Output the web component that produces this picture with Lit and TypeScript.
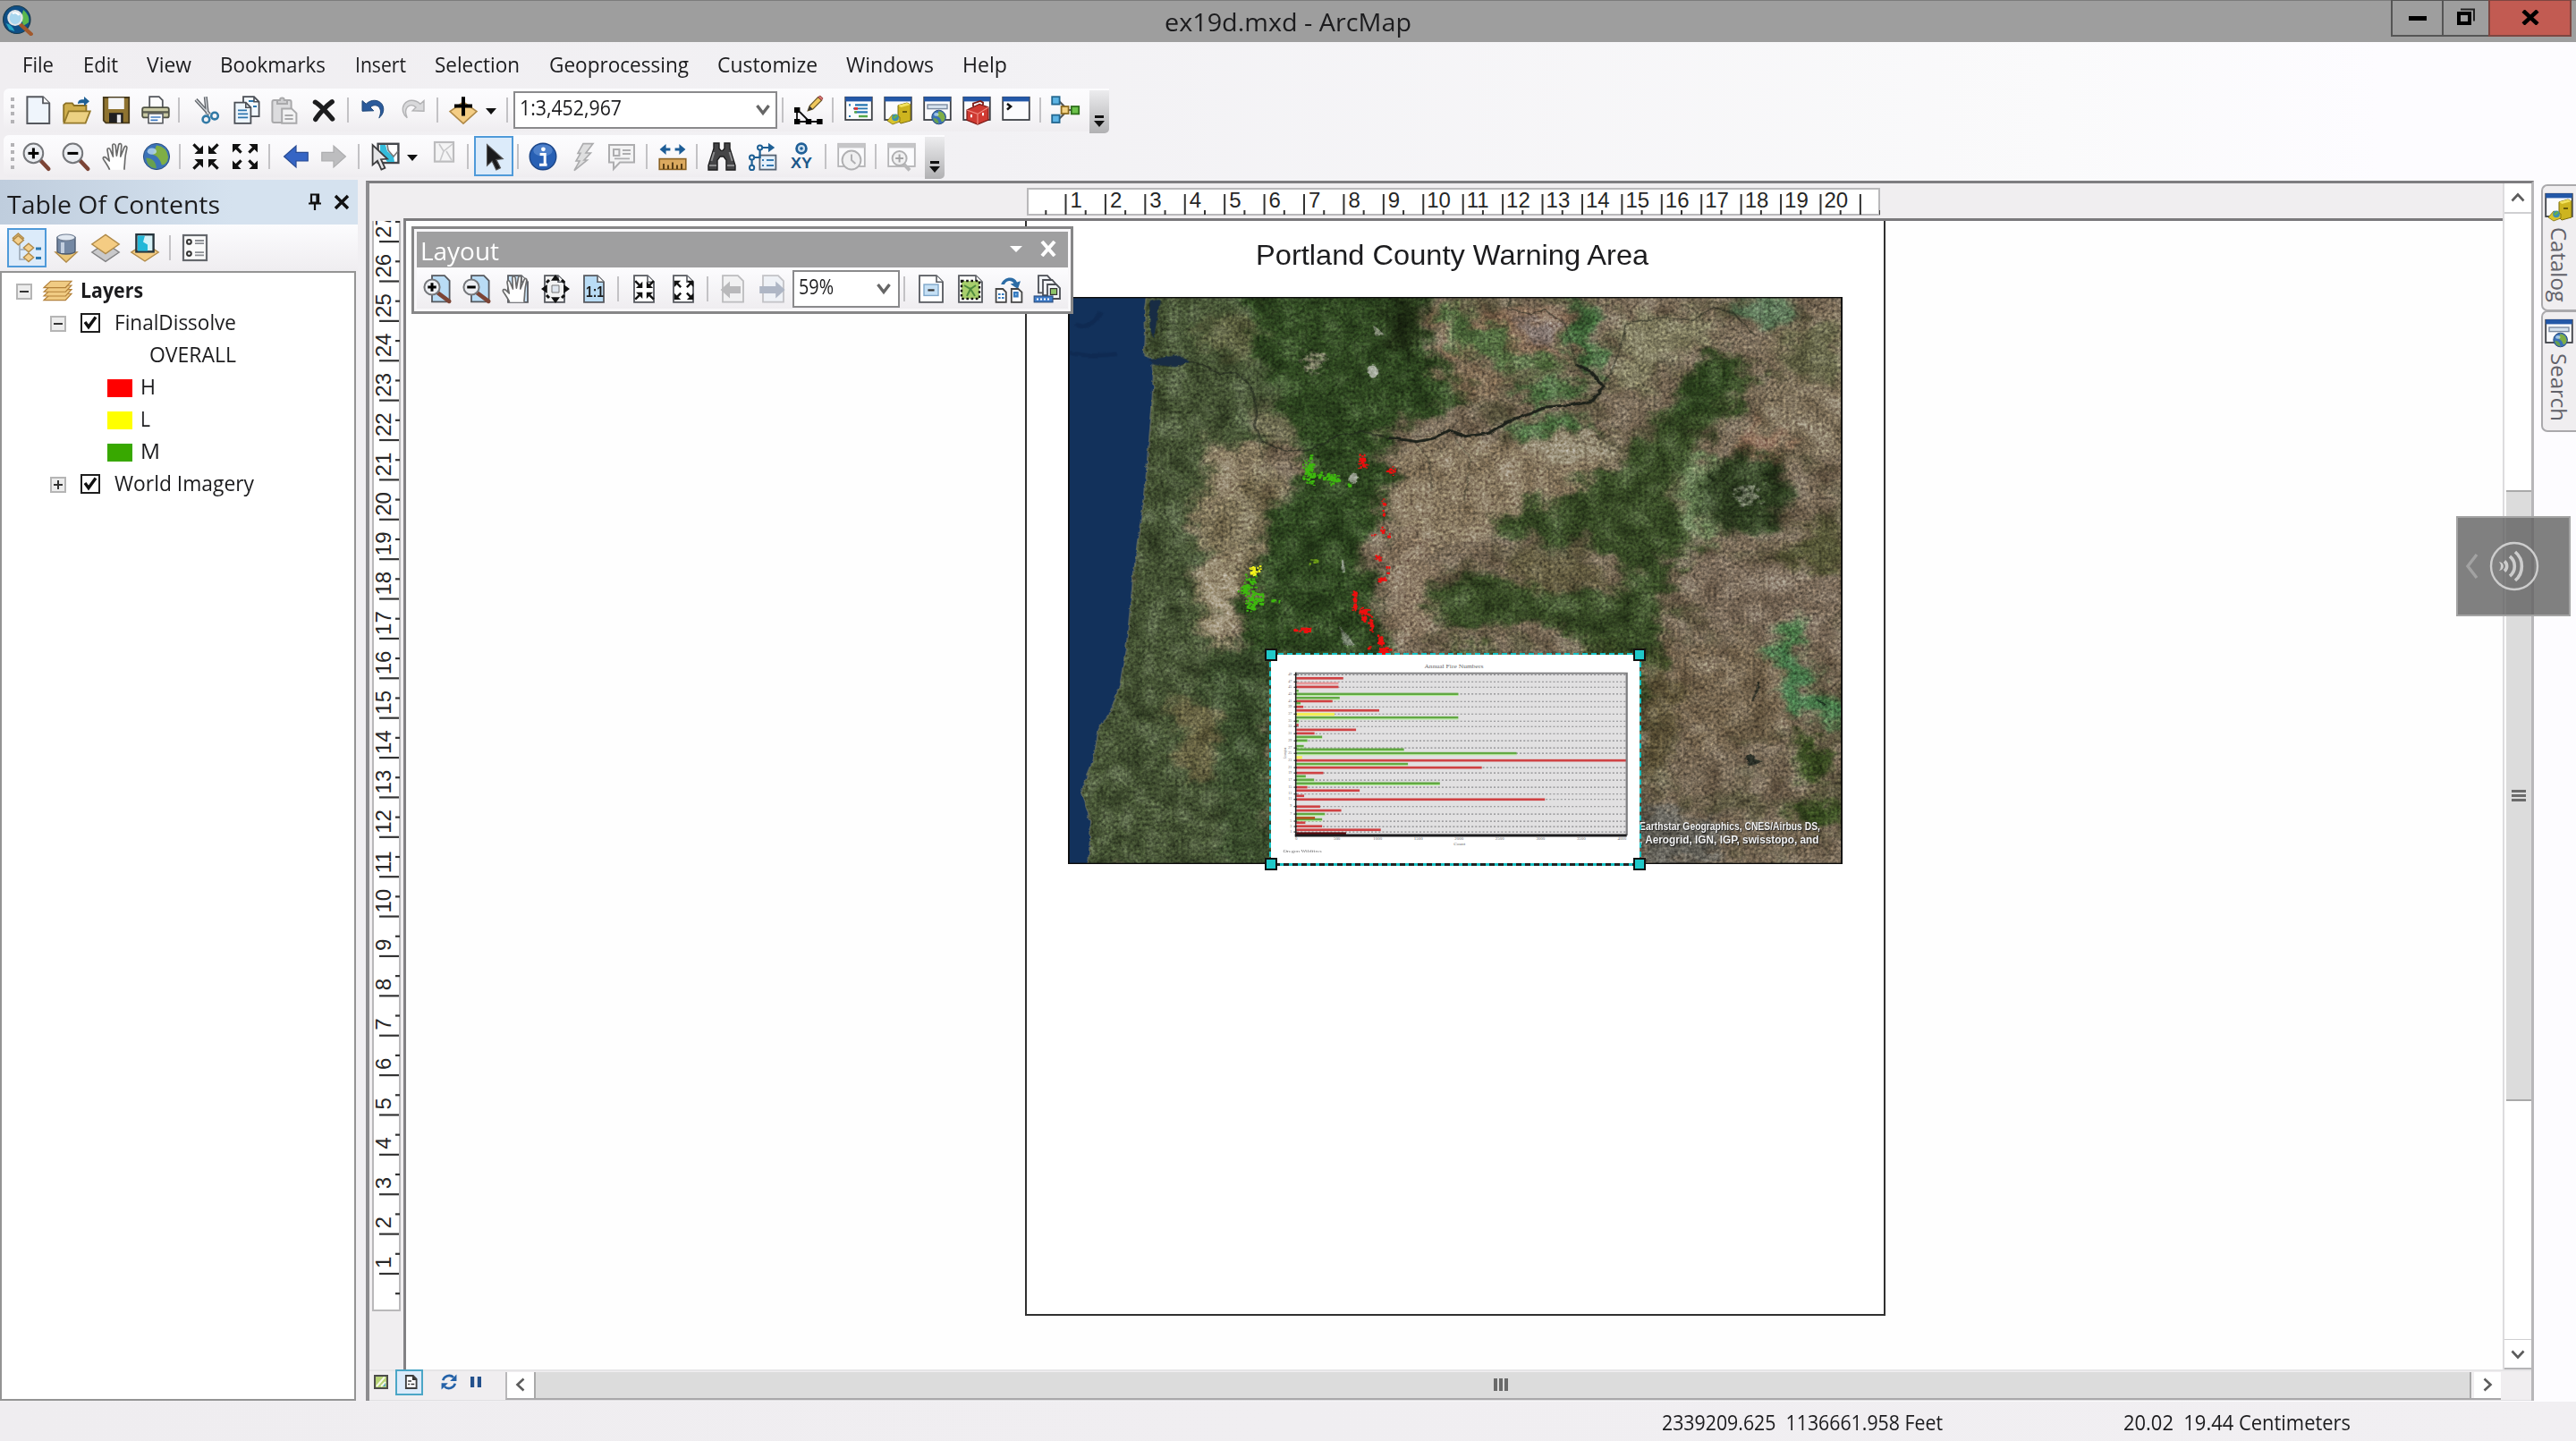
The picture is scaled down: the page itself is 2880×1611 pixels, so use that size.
import { LitElement, html, svg, css, TemplateResult, SVGTemplateResult } from "lit";
import { customElement } from "lit/decorators.js";

const UI = '"Open Sans", "Noto Sans", sans-serif';
const ARIAL = '"Liberation Sans", Arial, sans-serif';

const ctx = document.createElement("canvas").getContext("2d")!;

/** Text condensed or widened horizontally to occupy an exact width. */
function fit(text: string, size: number, width: number, family = UI, weight = 400): TemplateResult {
  ctx.font = `${weight} ${size}px ${family}`;
  const k = width / ctx.measureText(text).width;
  return html`<span class="fit" style="width:${width}px;font:${weight} ${size}px ${family}"
    ><span class="fit-in" style="transform:scaleX(${k.toFixed(4)})">${text}</span></span>`;
}

type Art = SVGTemplateResult;

const page = (fill = "#f4f9fe", x = 2.5): Art =>
  svg`<path d="M${x} .6h7.5l3.5 3.5v11.3h-11z" fill=${fill} stroke="#55585e" stroke-width=".9"/><path d="M${x + 7.5} .6v3.5h3.5" fill="#fff" stroke="#55585e" stroke-width=".8"/>`;
const lens = (cx: number, cy: number, r: number, sign: boolean, fill = "#eceef2"): Art => svg`
  <path d="M${cx + r * 0.75} ${cy + r * 0.75}L14.6 14.9" stroke="#7c4436" stroke-width="2.3" stroke-linecap="round"/>
  <circle cx=${cx} cy=${cy} r=${r} fill=${fill} stroke="#75777b" stroke-width="1"/>
  <path d="M${cx - r * 0.55} ${cy}h${r * 1.1}" stroke="#000" stroke-width="1.5"/>
  ${sign ? svg`<path d="M${cx} ${cy - r * 0.55}v${r * 1.1}" stroke="#000" stroke-width="1.5"/>` : ""}`;
const hand: Art = svg`<path d="M4.3 15.4C3.6 13.6 2 11.4.7 9.3.4 8.2 1.7 8 2.4 8.8l1.7 1.7L3 4.3c-.1-1.1 1.2-1.3 1.6-.2L6.2 8 5.9 1.9c0-1.2 1.5-1.2 1.7 0L8.2 7.6 9.3 1.5c.3-1.1 1.7-.8 1.6.3L10.4 8l2.1-5.2c.5-1 1.7-.5 1.4.6-.7 3-1 5-1.1 7.1 0 2-.4 3.4-.3 4.9" fill="#fff" stroke="#6b6b6b" stroke-width=".85" stroke-linejoin="round"/>`;
const arrowsIn: Art = svg`<g fill="#111" stroke="#111" stroke-width="1.6"><path d="M1.2 1.2l3 3M14.8 1.2l-3 3M1.2 14.8l3-3M14.8 14.8l-3-3"/><path stroke="none" d="M6.5 1.7v4.8H1.7zM9.5 1.7v4.8H14.3zM6.5 14.300V9.500H1.700zM9.500 14.300V9.500H14.300z"/></g>`;
const arrowsOut: Art = svg`<g fill="#111" stroke="#111" stroke-width="1.6"><path d="M2.500 2.500l3.300 3.300M13.500 2.500l-3.300 3.300M2.500 13.500l3.300-3.300M13.500 13.500l-3.300-3.300"/><path stroke="none" d="M1 1h4.800L1 5.800zM15 1h-4.800L15 5.800zM1 15h4.800L1 10.200zM15 15h-4.800L15 10.200z"/></g>`;
const win = (c = "#3e4146", bar = "#2358a8"): Art =>
  svg`<rect x=".6" y=".9" width="14.800" height="12.600" fill="#fbfbfd" stroke=${c} stroke-width=".9"/><rect x=".6" y=".6" width="14.800" height="2.600" fill=${bar}/>`;
const diamond = (cx: number, cy: number, w: number, h: number, fill: string, st = "#b08a48"): Art =>
  svg`<path d="M${cx} ${cy - h}L${cx + w} ${cy}L${cx} ${cy + h}L${cx - w} ${cy}z" fill=${fill} stroke=${st} stroke-width=".7"/>`;
const earth = (cx: number, cy: number, r: number): Art => svg`
  <circle cx=${cx} cy=${cy} r=${r} fill="#3a72b8" stroke="#2d4f7d" stroke-width=".5"/>
  <path d="M${cx} ${cy - r * 0.85}q${r * 0.8} ${r * 0.1} ${r * 0.9} ${r * 0.9}q-${r * 0.1} ${r * 0.6}-${r * 0.5} ${r * 0.6}q-${r * 0.2}-${r * 0.7}-${r * 0.7}-${r * 0.8}z" fill="#7fae45"/>
  <path d="M${cx - r * 0.8} ${cy + r * 0.1}q${r * 0.7} 0 ${r * 0.8} ${r * 0.8}q-${r * 0.7} 0-${r * 0.8}-${r * 0.8}z" fill="#68a04e"/>
  <ellipse cx=${cx - r * 0.35} cy=${cy - r * 0.4} rx=${r * 0.35} ry=${r * 0.25} fill="#b9d8f2" opacity=".8"/>`;

const ICONS: Record<string, Art> = {
  new: svg`<path d="M1.700.6h8.800l3.600 3.600v11.300H1.700z" fill="#eff5fc" stroke="#55585e" stroke-width="1"/><path d="M10.500.6v3.600h3.600" fill="#fff" stroke="#55585e" stroke-width=".9"/>`,
  open: svg`<path d="M.6 14.900V5.200l1.200-1h3.600l1 1.300h6.800v3" fill="#cfae4c" stroke="#8a6f22" stroke-width=".9"/><path d="M.8 15.300l2.600-6.600h12l-2.600 6.600z" fill="#ecd182" stroke="#94792a" stroke-width=".9"/><path d="M8.500 4.500c0-2 1.500-2.600 3.500-2.400V.5l3 2.600-3 2.600V4.200c-1.600-.2-2.400 0-3.500.3z" fill="#1f6095"/>`,
  save: svg`<path d="M.9 1h14.200v14.200H2.200L.9 13.800z" fill="#8e7330" stroke="#46391a" stroke-width=".9"/><rect x="3.600" y="1.200" width="8.800" height="6.300" fill="#f5f6f7"/><rect x="4" y="9.600" width="7.800" height="5.500" fill="#1e1e20"/><rect x="8.400" y="10.600" width="2.200" height="4.500" fill="#e7e7e9"/>`,
  print: svg`<path d="M4.600.6h5.300l2 2v5h-7.300z" fill="#fdfdfd" stroke="#54575c" stroke-width=".9"/><rect x=".6" y="6.600" width="14.800" height="5.600" rx="1" fill="#c9c9a4" stroke="#4f5142" stroke-width=".9"/><path d="M1 9.200h14" stroke="#5b5d4e" stroke-width="1.200"/><path d="M4 10h8v5.400H4z" fill="#fff" stroke="#54575c" stroke-width=".8"/><path d="M5.200 12h5.600M5.200 13.700h4" stroke="#3f7ac0" stroke-width=".8"/>`,
  cut: svg`<path d="M2 2.200l7.600 8.200M7.400.6l1 9.600" stroke="#5d6167" stroke-width="2"/><path d="M2 2.200l7.600 8.200M7.400.6l1 9.600" stroke="#d0d3d7" stroke-width=".7"/><circle cx="7.700" cy="13.200" r="1.900" fill="none" stroke="#3179a5" stroke-width="1.300"/><circle cx="12.500" cy="11.300" r="1.900" fill="none" stroke="#3179a5" stroke-width="1.300"/>`,
  copy: svg`<path d="M6 .6h6l2.800 2.800v8.200H6z" fill="#f2f8fe" stroke="#4a4e55" stroke-width=".9"/><path d="M1.200 3.800h6.200l2.800 2.800v8.800h-9z" fill="#eef6fd" stroke="#4a4e55" stroke-width=".9"/><path d="M3 8.200h5M3 10.200h5.600M3 12.200h5.600M9 3h3M11.500 6h2" stroke="#2c75ad" stroke-width=".9"/><path d="M12 .6v2.800h2.800M7.400 3.800v2.800h2.800" fill="none" stroke="#4a4e55" stroke-width=".8"/>`,
  paste: svg`<g stroke="#a9a9ab" fill="#dcdcde"><rect x="1.200" y="2.500" width="10.600" height="12.500" rx="1"/><path d="M4 4.500V2.500h1.500a1.200 1.200 0 0 1 2.400 0h1.600v2z" fill="#cfcfd1"/><path d="M6.600 7.200h5.400l2.700 2.600v5.600H6.600z" fill="#f2f2f3"/><path d="M8.200 11h4.600M8.200 13h4.600" stroke-width=".9"/></g>`,
  del: svg`<path d="M3.200 3.600c2 1 7.500 7 9.600 9.400M12.600 3.400C9.500 5.600 5 10.500 3.400 13.200" stroke="#1d1d1f" stroke-width="2.700" stroke-linecap="round" fill="none"/>`,
  undo: svg`<path d="M2 8.600V2.800l2.100 1.800C7 1.900 11 2 13 4.700c1.700 2.700.8 5.700-1.600 7.700 1.100-2.600 1.200-4.600-.2-6.200-1.400-1.300-3.300-1-4.700.3l1.900 1.900z" fill="#2a5a9b" stroke="#1d4577" stroke-width=".5"/>`,
  redo: svg`<path d="M14 8.600V2.800l-2.100 1.800C9 1.900 5 2 3 4.700c-1.700 2.700-.8 5.700 1.600 7.700C3.500 9.800 3.400 7.800 4.800 6.200c1.400-1.300 3.300-1 4.700.3L7.600 8.400z" fill="#d9d9db" stroke="#b2b2b4" stroke-width=".7"/>`,
  add: svg`<path d="M8 3.500l7.500 5.300L8 15.600.5 8.800z" fill="#f4cd84" stroke="#b08a48" stroke-width=".8"/><path d="M8 .6v10.600M3 5.700h10" stroke="#000" stroke-width="2"/>`,
  editor: svg`<path d="M1.500 8.500v6h13M3 9l4.500 4.500" stroke="#111" stroke-width=".9" fill="none"/><path d="M0 6.500h3.200v3H0zM0 13h3.200v3H0zM6.400 13h3.200v3H6.400zM12.600 13h3.200v3h-3.200z" fill="#000"/><path d="M7.600 8.400l1-2.700L13.300.8l2 1.800-4.900 4.900z" fill="#efc75c" stroke="#6b5a2c" stroke-width=".6"/><path d="M13.300.8l2 1.800.7-1.200L14.500 0z" fill="#d4716e" stroke="#8b3a38" stroke-width=".4"/><path d="M7.600 8.400l1-2.700 1.800 1.800z" fill="#333"/>`,
  toc: svg`${win()}<path d="M2.500 5.200h1M6 5.200h7M2.500 11.500h1M6 9.200h7" stroke="#2474b0" stroke-width="1.100"/><path d="M5 7.200h8" stroke="#2474b0" stroke-width=".9"/><path d="M5.500 7.200h2" stroke="#d33" stroke-width="1.400"/><path d="M5.500 9.200h1.500M8 11.500h5" stroke="#55a847" stroke-width="1.200"/>`,
  catalog: svg`${win()}<path d="M8 5.400l5-1.400 2 1v9L9.500 15.500 8 14z" fill="#cdb41f" stroke="#7b6c0e" stroke-width=".5"/><path d="M8 5.400l5-1.400 2 1-5.300 1.500z" fill="#f2e25d"/><path d="M10.500 9h2.500" stroke="#5b5009" stroke-width=".9"/><path d="M2 14l3-3.500 4 1.500v2.500L5 16z" fill="#d9c42c" stroke="#7b6c0e" stroke-width=".4"/><circle cx="6.500" cy="12.200" r="1.900" fill="#3d8fb0"/><path d="M5.500 12.500l2-1.500" stroke="#6bb045" stroke-width="1.200"/>`,
  search: svg`${win()}<rect x="2.500" y="5" width="11" height="2.300" fill="#d5e1ee" stroke="#7b8aa0" stroke-width=".7"/>${earth(8.8, 12, 3.9)}`,
  toolbox: svg`${win()}<path d="M2.500 8l7-3.300 5 1.800v7L8.500 16l-6-2.300z" fill="#cf3a32" stroke="#7c1814" stroke-width=".6"/><path d="M2.500 8l6 2.200 6-3.700M8.500 10.200V16" stroke="#f08a80" stroke-width=".6" fill="none"/><path d="M6 6V4.300l4-1.300 1.500.8v1.400" fill="none" stroke="#7c1814" stroke-width=".9"/><path d="M5 10.500v1.600M11.500 9.500v1.600" stroke="#fff" stroke-width="1"/>`,
  python: svg`${win()}<path d="M3 4.500l2 1.500-2 1.800" stroke="#111" stroke-width="1.300" fill="none"/>`,
  model: svg`<path d="M4.500 3l3.500 3.500M4.500 13L8 9.500M10 8h3" stroke="#555" stroke-width="1.100"/><rect x=".6" y=".6" width="4.200" height="4.200" fill="#5db4e4" stroke="#22668f" stroke-width=".9"/><rect x=".6" y="10.800" width="4.200" height="4.200" fill="#5db4e4" stroke="#22668f" stroke-width=".9"/><rect x="5.800" y="6" width="4" height="4" fill="#f3d182" stroke="#8c6b20" stroke-width=".9"/><rect x="11.400" y="6" width="4.200" height="4.200" fill="#6cc24a" stroke="#2e6f1b" stroke-width=".9"/>`,
  zoomin: lens(6.2, 6.2, 5.4, true),
  zoomout: lens(6.2, 6.2, 5.4, false),
  hand,
  globe: earth(8, 8, 7.3),
  fixedin: arrowsIn,
  fixedout: arrowsOut,
  back: svg`<path d="M1.300 8L8 2v3.700h6.600v4.800H8V14z" fill="#3565c4" stroke="#284b93" stroke-width=".6"/>`,
  fwd: svg`<path d="M14.700 8L8 2v3.700H1.400v4.800H8V14z" fill="#bdbdbf" stroke="#adadaf" stroke-width=".6"/>`,
  select: svg`<rect x="3.800" y=".9" width="11.400" height="10.600" fill="#fff" stroke="#44474c" stroke-width="1.200"/><path d="M5 1.500h3l1 3.500 3.500 3 .5 3H9L5 6z" fill="#34bcdb"/><path d="M9 1.500l.5 3 3 3.500 2.500-3" fill="none" stroke="#777" stroke-width=".8"/><path d="M.8 1.500v11.200l2.700-2.300 2.200 4.900 2-.9-2.200-4.800 3.500-.3z" fill="#e6e6e8" stroke="#3d3d3f" stroke-width=".9"/>`,
  clear: svg`<rect x="2.500" y="0" width="10.500" height="10.800" fill="#f4f4f5" stroke="#bcbcbe" stroke-width="1.100"/><path d="M5 1l2.500 4L12.500 1M7.500 5l-2 5.500M9 5l3 5" fill="none" stroke="#c8c8ca" stroke-width=".8"/>`,
  arrow: svg`<path d="M4 .8v12.600l3-2.700 2.500 5.300 2.500-1.200-2.500-5 4-.4z" fill="#1b1b1d" stroke="#555" stroke-width=".6"/>`,
  info: svg`<circle cx="8" cy="8" r="7.400" fill="#2860b4" stroke="#1d4688" stroke-width=".7"/><ellipse cx="8" cy="4.500" rx="5.400" ry="3.300" fill="#6c9bdc" opacity=".55"/><path d="M6.300 6.700h2.800v5.500M6 12.600h4.300" stroke="#fff" stroke-width="1.500" fill="none"/><circle cx="8.200" cy="3.900" r="1.200" fill="#fff"/>`,
  bolt: svg`<path d="M8 .8h5.500L9.500 6h2.700L8.500 10h1.700L3 15.800 6 10.500H4L6.500 6.200H5z" fill="#dededf" stroke="#ababad" stroke-width=".8"/>`,
  note: svg`<path d="M1 1.500h14v9.800H7L3.500 15v-3.700H1z" fill="#f3f3f4" stroke="#adadaf"/><rect x="3.500" y="4" width="3.200" height="3.500" fill="none" stroke="#adadaf"/><path d="M8.500 4.500h4.500M8.500 6.500h4.500M4 9.200h8.500" stroke="#adadaf" stroke-width=".9"/>`,
  measure: svg`<path d="M.8 4l3.500-3v2.200h2.400v1.600H4.300V7zM15.200 4l-3.500-3v2.200H9.300v1.600h2.400V7z" fill="#1d5d97"/><rect x=".6" y="9.300" width="14.800" height="5.900" fill="#dba95f" stroke="#8b6224" stroke-width=".8"/><path d="M3 15v-3M5.500 15v-2.200M8 15v-3.800M10.500 15v-2.200M13 15v-3" stroke="#4c3410" stroke-width=".9"/>`,
  binoc: svg`<path d="M3.500.5h3v3l1 1.200h1l1-1.200v-3h3v3l3 9.500v2.500h-5V10L9 8H7l-1.500 2v5.500h-5V13l3-9.500z" fill="#454547" stroke="#1d1d1e" stroke-width=".7"/><path d="M2.200 10.500l1.500-5M12.300 5.500l1.500 5M1 13h4M11 13h4" stroke="#8c8c8e" stroke-width="1"/>`,
  path: svg`<rect x="6.200" y="7.300" width="9" height="8" fill="#e4f0fa" stroke="#556272" stroke-width=".9"/><path d="M7.500 10h1M7.500 13h1M10 10h4M10 13h4" stroke="#3579b1" stroke-width="1"/><path d="M1.800 14V8.500h4.500V3h6" fill="none" stroke="#1f6095" stroke-width="1.100"/><circle cx="1.800" cy="14.200" r="1.300" fill="#fff" stroke="#1f6095"/><circle cx="1.800" cy="8.500" r="1.300" fill="#fff" stroke="#1f6095"/><circle cx="6.300" cy="3" r="1.300" fill="#fff" stroke="#1f6095"/><path d="M11 .4L14.600 3 11 5.600z" fill="#1f6095"/>`,
  xy: svg`<circle cx="8" cy="3.500" r="2.700" fill="#cfe2f2" stroke="#1f5f97" stroke-width="1.400"/><circle cx="8" cy="3.500" r=".9" fill="#1f5f97"/><text x="8" y="14.700" font-family="Liberation Sans" font-weight="700" font-size="8.500" text-anchor="middle" textLength="12" lengthAdjust="spacingAndGlyphs" fill="#1c5789">XY</text>`,
  clock: svg`${win("#b4b4b6", "#c6c6c8")}<circle cx="8" cy="10" r="5.200" fill="#f0f0f1" stroke="#b0b0b2"/><path d="M8 6.800V10l2.200 2" fill="none" stroke="#b0b0b2"/>`,
  viewer: svg`${win("#b4b4b6", "#c6c6c8")}<path d="M9 12l3.500 3.700" stroke="#b8b8ba" stroke-width="2"/><circle cx="6.800" cy="9" r="4" fill="#f0f0f1" stroke="#b0b0b2"/><path d="M4.600 9H9M6.800 6.800v4.400" stroke="#a4a4a6"/>`,
  pzoomin: svg`<path d="M5 .6h7l2.800 2.800v11.800H5z" fill="#b9dcf5" stroke="#55585e" stroke-width=".9"/>${lens(5, 7, 4.3, true)}`,
  pzoomout: svg`<path d="M5 .6h7l2.800 2.800v11.800H5z" fill="#b9dcf5" stroke="#55585e" stroke-width=".9"/>${lens(5, 7, 4.3, false)}`,
  phand: svg`${page("#cbe4f7", 3.5)}${hand}`,
  pfull: svg`${page("#f2f2f2", 2)}<path d="M8 0l2.500 3.400h-5zM8 16l2.500-3.400h-5zM0 8l3.400-2.500v5zM16 8l-3.400-2.500v5z" fill="#111"/><path d="M3 4.500l1.500-1.500M13 4.500L11.500 3M3 11.500L4.500 13M13 11.500L11.500 13" stroke="#111" stroke-width="1.500"/><path d="M6 6h4v4H6z" fill="#dfe6ee" stroke="#777" stroke-width=".5"/>`,
  p11: svg`${page("#b9dcf5", 2)}<text x="8" y="12.600" font-family="Liberation Sans" font-weight="700" font-size="8" text-anchor="middle" textLength="10" lengthAdjust="spacingAndGlyphs" fill="#1a1a1a">1:1</text>`,
  pin: svg`${page("#fff", 2)}<g transform="translate(1.700 2.600) scale(.76)">${arrowsIn}</g>`,
  pout: svg`${page("#fff", 2)}<g transform="translate(1.700 2.600) scale(.76)">${arrowsOut}</g>`,
  pback: svg`<path d="M2 .6h8.500l3 3v11.700H2z" fill="#f1f1f2" stroke="#bcbcbe" stroke-width=".9"/><path d="M.8 8.500L6 3.800v2.700h6v4H6v2.700z" fill="#b9b9bb"/>`,
  pfwd: svg`<path d="M2.500 .6h8.500l3 3v11.700H2.500z" fill="#eef1f6" stroke="#c2c2c6" stroke-width=".9"/><path d="M14.800 8.500L9.600 3.800v2.700h-9v4h9v2.700z" fill="#aeb6c5"/>`,
  pdraft: svg`<path d="M1.500 .6h9.500l3.500 3.500v11.300h-13z" fill="#fff" stroke="#55585e" stroke-width=".9"/><path d="M11 .6v3.500h3.500" fill="#fff" stroke="#55585e" stroke-width=".8"/><rect x="4" y="5.500" width="8" height="6.200" fill="#c5e0f5" stroke="#7fa7c9" stroke-width=".7"/><path d="M6.200 8.700h3.600" stroke="#333" stroke-width="1.100"/>`,
  pfocus: svg`<path d="M1.500 .6h9.500l3.500 3.500v11.300h-13z" fill="#fff" stroke="#55585e" stroke-width=".9"/><path d="M11 .6v3.500h3.500" fill="#fff" stroke="#55585e" stroke-width=".8"/><rect x="3" y="3.500" width="10" height="10" fill="#a8cf6d" stroke="#111" stroke-width="1.200" stroke-dasharray="1.300 1.300"/><path d="M4.500 6l3.500 2 3-2M6 12l2-4 2.500 4" stroke="#4e8a3e" fill="none"/>`,
  pchange: svg`<path d="M3.600 5.500C5 1 11 .5 12.500 4.200L14.500 3.600 13 8 8.800 5.300l1.900-.5C9.500 2.800 6.500 3 5.500 5.500z" fill="#2c6ca5"/><path d="M.8 8h3.800l1.800 1.800v5.600H.8zM9.400 8h3.800L15.200 9.800v5.600H9.400z" fill="#fff" stroke="#444" stroke-width=".9"/><path d="M2 11h1.300M4 11h1.300M2 13h1.300M4 13h1.300M11 10h1.800v2.200H11z" stroke="#357ac0" stroke-width="1.100" fill="#8fc3ea"/>`,
  pddp: svg`<g fill="#f2f4f7" stroke="#4c4f55" stroke-width=".9"><path d="M3 .6h5l1.800 2v7.600H3z"/><path d="M5.500 3h5.200l1.800 2v6.600h-7z"/><path d="M8 5.500h5l2 2v6H8z"/></g><rect x="9.700" y="7.800" width="3.600" height="3.400" fill="#8dc468" stroke="#333" stroke-width=".6"/><rect x=".6" y="12" width="10.400" height="3.400" fill="#3f7cc9" stroke="#2b4f80" stroke-width=".6"/><path d="M2 13.700h8" stroke="#fff" stroke-width="1" stroke-dasharray="1 1"/>`,
  tlist: svg`<path d="M4 5v9.500h3M4 9h3" fill="none" stroke="#9aa7b5" stroke-width=".8"/>${diamond(3.2, 2.6, 3, 2.6, "#f3cf8c")}${diamond(3.2, 3.8, 3, 2.6, "#f3cf8c")}${diamond(9, 8, 2.8, 2.4, "#f3cf8c")}${diamond(9, 13.4, 2.8, 2.4, "#f3cf8c")}<path d="M13 8.500h3M13 13.800h3" stroke="#2a78b0" stroke-width="1.500"/>`,
  tsource: svg`<path d="M2 10.500h12L8 16z" fill="#ecc777" stroke="#b08a48" stroke-width=".7"/><path d="M3 2.200v7.600c0 2.300 10 2.300 10 0V2.200z" fill="#7488a3" stroke="#4b5a70" stroke-width=".7"/><ellipse cx="8" cy="2.300" rx="5" ry="1.800" fill="#e1e8f1" stroke="#6d7b90" stroke-width=".6"/><path d="M6 5v6" stroke="#c3cfdf" stroke-width="2"/>`,
  tvis: svg`${diamond(8, 10.5, 7.6, 5.2, "#c9c9cb", "#828284")}${diamond(8, 6, 7.6, 5.3, "#f4cc83")}`,
  tsel: svg`${diamond(8, 10.5, 7.6, 5, "#f4cc83")}<rect x="3.200" y=".6" width="9.600" height="9.600" fill="#d6f2f8" stroke="#26343c" stroke-width="1.200"/><path d="M4 1.300h4l-1 3.500 2.500 1.500v3.500H4z" fill="#23b7d8"/>`,
  topt: svg`<rect x="1.500" y="1" width="13" height="14" fill="#fafafa" stroke="#65686d" stroke-width="1.100"/><circle cx="4.700" cy="4.700" r="1.200" fill="none" stroke="#333"/><circle cx="4.700" cy="11.300" r="1.200" fill="none" stroke="#333"/><path d="M8 4h5M8 5.600h5M8 10.600h5M8 12.200h5" stroke="#8c8f94" stroke-width=".9"/>`,
  layers: svg`${[11.5, 8.5, 5.5, 2.5].map(
    (y) => svg`<path d="M0 ${y + 3}L4 ${y - 1.7}H16L12.5 ${y + 3}z" fill="#f0cb83" stroke="#b3813a" stroke-width=".7"/>`
  )}`,
  dview: svg`<rect x="1" y="1" width="14" height="14" fill="#b7d375" stroke="#4c4c4c" stroke-width="2"/><path d="M3 13L12 2.500M8 13l5-5" stroke="#f5f8e8" stroke-width="2"/><path d="M10 13l3-4v4z" fill="#5aaac9"/>`,
  lview: svg`<path d="M2 1h8.500l4 4v10H2z" fill="#fff" stroke="#3e3e3e" stroke-width="2"/><path d="M9.500 1v5h5z" fill="#333"/><path d="M4.500 7h4M4.500 10.500h2M8 10.500h4" stroke="#333" stroke-width="1.500"/>`,
  refresh: svg`<path d="M2 6.500C3 2 9 0 12.500 3.500M14 9.500C13 14 7 16 3.500 12.500" fill="none" stroke="#2462a8" stroke-width="2.300"/><path d="M15.500.5v6.500H9zM.5 15.500V9H7z" fill="#2462a8"/>`,
  pause: svg`<path d="M2 2h4.200v12H2zM9.800 2H14v12H9.800z" fill="#23508c"/>`,
};

const ico = (name: string, w = 32, h = 32): TemplateResult =>
  html`<svg class="ico" width=${w} height=${h} viewBox="0 0 16 16" preserveAspectRatio="none">${ICONS[name]}</svg>`;

/** A toolbar entry: kind, horizontal centre and width, measured along the bar. */
type Item = [kind: string, centre: number, width?: number];

const BAR1: Item[] = [
  ["grip", 14], ["new", 43], ["open", 86], ["save", 130], ["print", 174], ["|", 200], ["cut", 231], ["copy", 276],
  ["paste", 318], ["del", 362], ["|", 389], ["undo", 417], ["redo", 462], ["|", 489], ["add", 518], ["v", 549],
  ["|", 567], ["scale", 721.5, 295], ["|", 875], ["editor", 904], ["|", 931], ["toc", 960], ["catalog", 1004],
  ["search", 1048], ["toolbox", 1092], ["python", 1136], ["|", 1163], ["model", 1191], ["more", 1229, 22],
];
const BAR2: Item[] = [
  ["grip", 14], ["zoomin", 41], ["zoomout", 85], ["hand", 130], ["globe", 175], ["|", 201], ["fixedin", 230],
  ["fixedout", 274], ["|", 301], ["back", 331], ["fwd", 373], ["|", 401], ["select", 431], ["v", 461], ["clear", 497],
  ["|", 523], ["pointer", 552, 44], ["|", 579], ["info", 607], ["bolt", 652], ["note", 695], ["|", 723],
  ["measure", 752], ["|", 779], ["binoc", 807], ["path", 853], ["xy", 896], ["|", 923], ["clock", 952], ["|", 979],
  ["viewer", 1008], ["more", 1045, 22],
];
const LAYOUT_BAR: Item[] = [
  ["pzoomin", 489], ["pzoomout", 533], ["phand", 577], ["pfull", 621], ["p11", 665], ["|", 691], ["pin", 721],
  ["pout", 765], ["|", 791], ["pback", 820], ["pfwd", 864], ["zoom", 946, 120], ["|", 1011], ["pdraft", 1041],
  ["pfocus", 1085], ["pchange", 1128], ["pddp", 1171],
];

function bar(items: Item[], origin = 0): TemplateResult[] {
  let x = origin;
  return items.map(([kind, c, given]) => {
    const w = given ?? (kind === "|" ? 2 : kind === "v" ? 12 : kind === "grip" ? 4 : 32);
    const gap = c - w / 2 - x;
    x = c + w / 2;
    const body =
      kind === "|" ? html`<i class="sep"></i>`
      : kind === "grip" ? html`<i class="grip"></i>`
      : kind === "v" ? html`<i class="tri"></i>`
      : kind === "more" ? html`<i class="more"><svg width="12" height="16" viewBox="0 0 12 16"><path d="M1 1h10v3H1zM0 7h12l-6 7z" fill="#111"/></svg></i>`
      : kind === "scale" ? html`<div class="combo">${fit("1:3,452,967", 23.5, 114)}${chev()}</div>`
      : kind === "zoom" ? html`<div class="combo z">${fit("59%", 23, 39)}${chev()}</div>`
      : kind === "pointer" ? html`<div class="pressed">${ico("arrow", 30, 30)}</div>`
      : ico(kind);
    return html`<div class="it ${kind === "more" ? "end" : ""}" style="margin-left:${gap}px;width:${w}px">${body}</div>`;
  });
}

const chev = (): TemplateResult =>
  html`<svg class="chev" width="16" height="14" viewBox="0 0 16 14"><path d="M1.500 2L8 10.500 14.500 2" fill="none" stroke="#666" stroke-width="3.400"/></svg>`;
const arrowGlyph = (rot: number): TemplateResult =>
  html`<svg width="18" height="18" viewBox="0 0 18 18"><path transform="rotate(${rot} 9 9)" d="M2.500 12.500L9 5.500l6.500 7" fill="none" stroke="#5c5c5c" stroke-width="2.600"/></svg>`;

const MENU: [string, number, number][] = [
  ["File", 25, 35], ["Edit", 93, 39], ["View", 164, 50], ["Bookmarks", 246, 118], ["Insert", 397, 57],
  ["Selection", 486, 95], ["Geoprocessing", 614, 156], ["Customize", 802, 112], ["Windows", 946, 98], ["Help", 1076, 50],
];

/** Chart bars: row position, end of the bar, colour key. */
const BARS: [number, number, string][] = [
  [174, 228, "r"], [191, 216, "p"], [203, 216, "r"], [216, 116, "g"], [227, 516, "g"], [240, 219, "g"], [251, 201, "r"],
  [258, 121, "g"], [270, 128, "r"], [282, 318, "r"], [295, 206, "y"], [306, 516, "g"], [318, 117, "g"], [331, 116, "r"],
  [347, 260, "r"], [359, 156, "r"], [371, 175, "g"], [383, 138, "g"], [402, 129, "g"], [413, 380, "g"], [426, 662, "g"],
  [440, 125, "y"], [450, 938, "r"], [462, 390, "g"], [474, 575, "r"], [492, 178, "r"], [503, 134, "g"], [515, 155, "g"],
  [527, 470, "g"], [540, 138, "r"], [551, 269, "r"], [569, 130, "r"], [581, 733, "r"], [605, 170, "r"], [618, 223, "r"],
  [630, 182, "g"], [648, 175, "g"], [643, 157, "o"], [659, 133, "r"], [671, 175, "r"], [683, 322, "r"], [695, 235, "d"],
];
const COLORS: Record<string, string> = { r: "#cf4244", p: "#e79a9b", g: "#62a843", y: "#f2ee55", o: "#b0541c", d: "#5c0d10" };
const GRID = [162, 186, 204, 227, 252, 270, 294, 318, 336, 360, 384, 408, 426, 450, 474, 492, 516, 540, 563, 581, 605, 630, 654, 672, 690];

const chart = (): TemplateResult => html`
  <svg class="chart" width="412" height="234" viewBox="47 95 923 703" preserveAspectRatio="none">
    <rect x="47" y="95" width="923" height="703" fill="#fff" />
    <text x="505" y="139" class="ct" font-size="16" text-anchor="middle" textLength="148" lengthAdjust="spacingAndGlyphs">Annual Fire Numbers</text>
    <rect x="110" y="155" width="828" height="547" fill="#e1e0e1" />
    ${GRID.map((y) => svg`<path d="M112 ${y}H938" stroke="#88888b" stroke-width="3.500" stroke-dasharray="4.500 4.800"/>`)}
    ${BARS.map(([y, x, c]) => svg`<rect x="110" y=${y - (c === "y" ? 5 : 4)} width=${x - 110} height=${c === "y" ? 10 : 8} fill=${COLORS[c]}/>
      ${c === "g" ? svg`<path d="M110 ${y + 5}H${x}" stroke="#b4ee9b" stroke-width="3"/>` : ""}`)}
    <path d="M110 157H938V702" fill="none" stroke="#7c7c7e" stroke-width="5" />
    <path d="M109 154V706" stroke="#222" stroke-width="3.500" />
    <path d="M107 702H938" stroke="#1c1c1e" stroke-width="9" />
    ${GRID.map((y, i) => svg`<path d="M104 ${y}h8" stroke="#222" stroke-width="3"/>
      <text x="99" y=${y + 2} class="ct" font-size="9" text-anchor="end">${49 - i * 2}</text>`)}
    ${[0, 500, 1000, 1500, 2000, 2500, 3000, 3500, 4000].map(
      (n, i) => svg`<text x=${110 + i * 102} y="717" class="ct" font-size="11" text-anchor="middle">${n}</text>`
    )}
    <text x="519" y="736" class="ct" font-size="12" text-anchor="middle">Count</text>
    <text transform="translate(86 425) rotate(-90)" class="ct" font-size="9" text-anchor="middle">Ecoregion</text>
    <text x="77" y="759" class="ct" font-size="13" textLength="97" lengthAdjust="spacingAndGlyphs">Oregon Wildfires</text>
  </svg>`;

/** Small pixel clusters scattered around a centre, with a fixed seed per cluster. */
function cluster(cx: number, cy: number, rx: number, ry: number, n: number, fill: string): Art {
  let s = (cx * 73 + cy * 31 + n * 7) | 0;
  const rnd = () => ((s = (s * 1103515245 + 12345) & 0x7fffffff) / 0x7fffffff);
  const out: Art[] = [];
  for (let i = 0; i < n; i++) {
    const dx = (rnd() + rnd() - 1) * rx;
    const dy = (rnd() + rnd() - 1) * ry;
    out.push(svg`<rect x=${(cx + dx).toFixed(1)} y=${(cy + dy).toFixed(1)} width=${(2 + rnd() * 5).toFixed(1)} height=${(2 + rnd() * 5).toFixed(1)} fill=${fill}/>`);
  }
  return svg`${out}`;
}

const R = "#f00f0f";
const G = "#3fb90f";
const Y = "#f4f41c";
const OCEAN = "M0 0H180L174 60 176 120 174 180 188 195 191 240 188 330 180 450 174 560 160 680 150 800 140 940 126 1060 107 1130 85 1175 74 1260 50 1340 70 1420 64 1560H0z";

const map = (): TemplateResult => html`
  <svg class="map" width="866" height="634" viewBox="25 28 1506 1505" preserveAspectRatio="none">
    <defs>
      <filter id="organic" x="-5%" y="-5%" width="110%" height="110%" color-interpolation-filters="sRGB">
        <feGaussianBlur stdDeviation="11" result="b" />
        <feTurbulence type="fractalNoise" baseFrequency=".019" numOctaves="6" seed="7" />
        <feDisplacementMap in="b" scale="95" xChannelSelector="R" yChannelSelector="G" />
      </filter>
      <filter id="edge" x="-5%" y="-5%" width="110%" height="110%" color-interpolation-filters="sRGB">
        <feTurbulence type="fractalNoise" baseFrequency=".05" numOctaves="3" seed="3" />
        <feDisplacementMap in="SourceGraphic" scale="9" xChannelSelector="R" yChannelSelector="G" />
      </filter>
      <filter id="tuft" x="-60%" y="-60%" width="220%" height="220%" color-interpolation-filters="sRGB">
        <feGaussianBlur stdDeviation="5" result="b" />
        <feTurbulence type="fractalNoise" baseFrequency=".07" numOctaves="3" seed="9" />
        <feDisplacementMap in="b" scale="55" xChannelSelector="R" yChannelSelector="G" />
      </filter>
      <filter id="grain" x="0" y="0" width="100%" height="100%" color-interpolation-filters="sRGB">
        <feTurbulence type="fractalNoise" baseFrequency=".171 .127" numOctaves="2" seed="11" />
        <feColorMatrix values="1 .6 0 0 -.3  1 .6 0 0 -.3  1 .6 0 0 -.3  0 0 0 0 1" />
      </filter>
      <filter id="relief" x="0" y="0" width="100%" height="100%" color-interpolation-filters="sRGB">
        <feTurbulence type="fractalNoise" baseFrequency=".0231 .0173" numOctaves="5" seed="23" />
        <feColorMatrix values="1.200 .8 0 0 -.5  1.200 .8 0 0 -.5  1.200 .8 0 0 -.5  0 0 0 0 1" />
      </filter>
      <filter id="scrub" x="0" y="0" width="100%" height="100%" color-interpolation-filters="sRGB">
        <feTurbulence type="fractalNoise" baseFrequency=".0107" numOctaves="7" seed="41" />
        <feColorMatrix values="0 0 0 0 .25  0 0 0 0 .27  0 0 0 0 .16  5 0 0 0 -2.500" />
      </filter>
    </defs>
    <rect x="0" y="0" width="1560" height="1560" fill="#766855" />
    <rect x="640" y="28" width="900" height="1505" filter="url(#scrub)" opacity=".45" />
    <g filter="url(#organic)">
      <path d="M100 0H420L440 300 400 420 320 400 300 560 250 600 285 700 275 880 310 960 340 960 420 900V1560H0V1100L140 800z" fill="#465435" />
      <path d="M300 960L430 940V1560H340z" fill="#3b4d2d" />
      <path d="M360 0H730L715 130 760 230 830 290 700 345 640 400 650 480 630 620 600 720 625 860 660 990H400L350 860 400 720 420 590 490 480 440 330 400 180z" fill="#2f4721" />
      <path d="M265 600L320 410 390 405 435 540 400 640 385 740 345 830 335 950 300 960 275 860 290 740z" fill="#7b7156" />
      <path d="M320 415L380 410 390 480 340 560 300 590z" fill="#8e8168" />
      <path d="M290 700L360 720 338 940 300 940z" fill="#94886e" />
      <path d="M300 780L336 760 330 940 305 940z" fill="#ada28a" />
      <path d="M225 1080L300 1120 325 1190 290 1310 250 1310z" fill="#716849" opacity=".8" />
      <path d="M380 300L440 330 470 420 400 420z" fill="#6d6b50" />
      <path d="M280 80H400L390 200 300 180z" fill="#5c6040" />
      <path d="M640 28H725L690 200 650 160z" fill="#1f2d14" />
      <path d="M720 60L980 60 1000 200 900 170 760 190z" fill="#846b55" />
      <path d="M900 90L975 100 980 170 910 130z" fill="#877a74" />
      <path d="M760 200L900 230 860 300 770 270z" fill="#7d6a53" />
      <path d="M745 70L800 60 900 180 1000 200 980 240 880 215 770 150z" fill="#4f693d" />
      <path d="M1000 40H1050L1060 250 1030 230 1000 140z" fill="#43693c" />
      <path d="M880 240L1040 260 930 330z M880 360L1040 330 1030 390 900 400z" fill="#46683b" />
      <path d="M1300 28H1440L1430 100 1340 100z" fill="#5b7556" />
      <path d="M1100 60L1300 90 1280 150 1180 190 1140 300 1080 260z" fill="#837f63" />
      <path d="M680 420L1000 400 1100 430 1000 560 860 640 720 700 660 740 650 560z" fill="#8a7b63" />
      <path d="M900 420L1110 400 1080 440 960 470z" fill="#9a917a" />
      <path d="M640 640L720 640 740 900 660 960z" fill="#897863" />
      <path d="M1360 120L1540 60V440L1430 480 1340 360 1400 240z" fill="#81745e" />
      <path d="M1340 370L1430 380 1400 470 1330 440z" fill="#8a6c57" />
      <path d="M1290 155L1370 240 1300 360 1240 420 1200 560 1250 700 1190 800 1180 960 1060 970 980 900 840 900 760 930 720 790 820 760 930 800 1080 820 1120 760 1060 700 860 660 870 620 1000 540 1120 460 1190 320z" fill="#394c27" />
      <path d="M1270 160L1320 200 1290 330 1200 370 1210 280z" fill="#2b401d" />
      <path d="M880 720L1020 710 1100 800 900 800z" fill="#635c41" />
      <path d="M740 960L860 940 850 975 760 975zM1000 960H1180V1060L1140 1180z" fill="#3b4a25" />
      <path d="M1220 440L1265 470 1280 690 1225 640z" fill="#6b8258" />
      <ellipse cx="1345" cy="550" rx="85" ry="110" fill="#2d3d20" />
      <path d="M1420 120L1530 100V260L1420 240z" fill="#4d5a36" opacity=".5" />
      <path d="M1440 640L1531 620V760L1400 760z" fill="#4d512f" opacity=".8" />
      <path d="M1190 700L1530 760V960L1280 900z" fill="#7c6d5c" />
      <path d="M1180 960L1400 960 1440 1180 1240 1250z" fill="#75654f" opacity=".8" />
      <path d="M1400 900L1440 880 1470 1060 1530 1080V1190L1420 1100z" fill="#4a7848" />
      <path d="M1390 960L1450 960 1480 1090 1520 1110V1160L1420 1090z" fill="#467649" />
      <path d="M1440 1190L1490 1200 1500 1320 1450 1330zM1430 1360H1531V1440H1430z" fill="#374a20" />
      <path d="M1140 1000L1230 1060 1180 1300 1140 1320z" fill="#5d5339" />
      <path d="M1140 1380L1300 1420 1280 1533H1140z" fill="#615f57" />
    </g>
    <path d="M1330 530h34v44h-34z" fill="#939885" filter="url(#tuft)" opacity=".75" />
    <g filter="url(#edge)" opacity=".8">
      <path d="M484 190l8-14 14 8 10-6 6 22-8 20-16 10-12-14z" fill="#a09a86" filter="url(#tuft)" />
      <ellipse cx="618" cy="226" rx="11" ry="17" fill="#c0c1b8" />
      <path d="M618 106l12 8 8 18-14-4z" fill="#8e9381" />
      <ellipse cx="581" cy="508" rx="9" ry="13" fill="#b0b1a8" />
      <ellipse cx="560" cy="742" rx="4" ry="18" fill="#9ca497" />
      <path d="M554 900l12 20 18 34-24-4z" fill="#7c8575" />
      <path d="M1342 1252l10-10 10 12 14 6-12 8-18 4z" fill="#17201a" />
      <path d="M1355 1100q14-30 12-50" fill="none" stroke="#252a22" stroke-width="5" />
      <path d="M1480 1095l16 14" fill="none" stroke="#15241a" stroke-width="6" />
    </g>
    <rect x="25" y="28" width="1506" height="1505" filter="url(#relief)" opacity=".45" style="mix-blend-mode:soft-light" />
    <rect x="25" y="28" width="1506" height="1505" filter="url(#grain)" opacity=".5" style="mix-blend-mode:overlay" />
    <g filter="url(#edge)">
      <path d=${OCEAN} fill="#12315b" stroke="#75785f" stroke-width="2" />
      <path d="M180 195L240 182 262 200 236 214 190 208zM184 40L204 34 192 140 184 110z" fill="#182c44" />
      <path d="M25 175q45 14 95 4M40 100q20 20 50-30" fill="none" stroke="#0e284e" stroke-width="10" opacity=".7" />
      <g fill="none" stroke="#1d211a">
        <path d="M260 200L285 205 320 232 350 226 378 262 392 320 388 370 402 412 450 436 500 432 550 395 600 386 650 402" stroke-width="4" opacity=".6" />
        <path d="M650 402L705 412 740 402 768 382 798 398 842 390 880 358 930 335 952 320 1005 314 1045 303 1066 266 1042 226 1012 208" stroke-width="7" />
        <path d="M1012 208L1000 140 990 100 950 60 930 75 880 60 885 28M1066 266L1095 180 1110 100 1180 82 1240 90 1280 55 1320 70 1360 130" stroke-width="3.500" opacity=".5" />
        <path d="M700 412l28 50 4 80M775 400l34 60-14 110M395 400l10 60" stroke-width="3" opacity=".35" />
      </g>
    </g>
    ${cluster(492, 488, 12, 44, 70, G)}${cluster(515, 503, 30, 12, 44, G)}${cluster(540, 511, 10, 16, 22, G)}
    ${cluster(570, 526, 5, 10, 5, G)}${cluster(505, 728, 16, 8, 8, "#6f9f18")}
    ${cluster(386, 750, 14, 16, 30, Y)}${cluster(380, 775, 14, 14, 14, G)}${cluster(370, 800, 18, 18, 45, G)}
    ${cluster(388, 828, 22, 22, 70, G)}${cluster(380, 850, 16, 12, 14, G)}${cluster(430, 832, 16, 5, 8, G)}
    ${cluster(597, 463, 9, 22, 34, R)}${cluster(653, 487, 13, 14, 14, R)}${cluster(637, 566, 4, 20, 4, R)}
    ${cluster(637, 600, 5, 12, 4, R)}${cluster(637, 645, 6, 14, 7, R)}${cluster(616, 660, 8, 8, 3, R)}${cluster(648, 658, 6, 8, 3, R)}
    ${cluster(626, 718, 9, 9, 9, R)}${cluster(645, 750, 4, 14, 4, R)}${cluster(635, 776, 10, 9, 16, R)}
    ${cluster(581, 820, 4, 22, 18, R)}${cluster(581, 848, 5, 14, 14, R)}${cluster(599, 862, 12, 12, 34, R)}${cluster(597, 880, 8, 12, 12, R)}
    ${cluster(613, 895, 6, 26, 18, R)}${cluster(485, 910, 14, 6, 28, R)}${cluster(465, 910, 5, 6, 4, R)}
    ${cluster(632, 945, 6, 26, 32, R)}${cluster(638, 967, 14, 12, 38, R)}${cluster(608, 962, 5, 10, 4, R)}
    <rect x="26.500" y="29.500" width="1503" height="1502" fill="none" stroke="#0d0d0d" stroke-width="3.500" />
  </svg>`;

function hRuler(): TemplateResult {
  const ticks: Art[] = [];
  for (let i = 0; i <= 21; i++) {
    const x = 43.5 + i * 44.42;
    ticks.push(svg`<path d="M${x - 22.2} 25v5" stroke="#333" stroke-width="2"/>`);
    if (i < 21) ticks.push(svg`<path d="M${x} 7v23" stroke="#333" stroke-width="2"/>`);
    if (i < 20) ticks.push(svg`<text x=${x + (i < 9 ? 5 : 4)} y="21.500" class="rt">${i + 1}</text>`);
  }
  return html`<svg class="hr" width="954" height="31">${svg`<rect x="1" y="1" width="952" height="29" fill="#fff" stroke="#b9b8ba" stroke-width="2"/>`}${ticks}</svg>`;
}

function vRuler(): TemplateResult {
  const ticks: Art[] = [];
  for (let n = 0; n <= 27; n++) {
    const y = 1424 - 247 - (n - 1) * 44.38;
    if (n > 0) {
      ticks.push(svg`<path d="M8 ${y}h22" stroke="#333" stroke-width="2.200"/>`);
      ticks.push(svg`<text transform="translate(20.500 ${y - (n < 10 ? 6 : 4)}) rotate(-90)" class="rt">${n}</text>`);
    }
    ticks.push(svg`<path d="M26 ${y - 22.2}h5" stroke="#333" stroke-width="2.200"/>`);
  }
  return html`<svg class="vr" width="32" height="1219">${svg`<path d="M1 -5V1218H31V-5z" fill="#fff" stroke="#b9b8ba" stroke-width="2"/>`}${ticks}</svg>`;
}

@customElement("app-root")
export class AppRoot extends LitElement {
  static styles = css`
    :host { display: block; }
    * { box-sizing: border-box; }
    svg { display: block; flex: none; }
    .ico { overflow: visible; }
    i { display: block; }
    .app {
      width: 2880px; height: 1611px; overflow: hidden; position: relative; display: grid;
      grid-template-rows: 47px 51px 52px 51px 1366px 44px;
      background: linear-gradient(90deg, #f0eef1 0, #f2f1f4 1100px, #fafafb 2300px, #fdfcff 2660px);
      color: #1c1c1e; font-family: "Open Sans", sans-serif;
    }
    .fit { display: inline-block; white-space: pre; flex: none; overflow: visible; }
    .fit-in { display: inline-block; transform-origin: 0 50%; }
    .title { background: #9e9e9e; border-top: 1px solid #7c7c7c; display: flex; position: relative; }
    .title .logo { margin: 5px 0 0 3px; }
    .title .name { flex: 1; padding-left: 1265px; display: flex; align-items: center; height: 46px; }
    .btns { display: flex; margin: -1px 5px 0 0; height: 41px; }
    .btns div { border: 2px solid #555; border-top: 1px solid #555; border-right: 0; display: flex; align-items: center; justify-content: center; padding-bottom: 2px; }
    .b1 { width: 57px; } .b2 { width: 52px; }
    .btns .b3 { width: 93px; background: #c25b52; border-right: 2px solid #7e4540; border-color: #7e4540; }
    .menu { display: flex; align-items: center; padding-bottom: 3px; }
    .tb { display: flex; align-items: stretch; }
    .strip { display: flex; align-items: center; background: linear-gradient(#fcfcfe, #f9f8fa 45%, #efedf0); margin: 1px 0 3px 4px; border-radius: 6px 0 0 6px; }
    .it { display: flex; align-items: center; justify-content: center; flex: none; align-self: stretch; }
    .sep { width: 2px; height: 28px; background: #c3c2c5; }
    .grip { width: 4px; height: 29px; background: repeating-linear-gradient(#b4b3b6 0 4px, transparent 4px 8.2px); }
    .tri { border: 6px solid transparent; border-top: 7px solid #111; border-bottom: 0; margin-top: 3px; }
    .it.end { align-items: stretch; margin-bottom: -2px; margin-top: 2px; }
    .more { width: 22px; background: linear-gradient(#ececee, #b1b1b3); display: flex; align-items: flex-end; justify-content: center; padding-bottom: 5px; border-radius: 0 0 5px 0; }
    .combo { width: 100%; height: 42px; border: 2px solid #8a8a8c; background: #fff; display: flex; align-items: center; justify-content: space-between; padding: 0 6px 0 5px; }
    .combo .fit { margin-top: -6px; }
    .combo.z { padding: 0 8px 0 5px; }
    .pressed { width: 44px; height: 45px; border: 2px solid #4f9ad9; background: #dcebfa; display: flex; align-items: center; justify-content: center; }
    .main { display: flex; }
    .toc { width: 400px; height: 1366px; display: flex; flex-direction: column; }
    .toc-h { height: 50px; background: linear-gradient(90deg, #bfcddd, #d5e2ef 65%); display: flex; align-items: center; padding: 3px 9px 0 8px; }
    .toc-h .sp { flex: 1; }
    .toc-h svg { margin-bottom: 3px; }
    .toc-h svg + svg { margin-left: 13px; }
    .toc-b { height: 52px; display: flex; align-items: center; padding: 0 0 0 8px; background: linear-gradient(#fcfcfe, #efedf0); }
    .toc-b .on { width: 44px; height: 44px; border: 2px solid #4f9ad9; background: #dcebfa; display: flex; align-items: center; justify-content: center; margin-right: 6px; }
    .toc-b .ico { margin-right: 12px; }
    .toc-b .on .ico { margin: 0; }
    .toc-b .sep { margin: 0 11px 0 -1px; }
    .tree { flex: 1; width: 398px; margin-bottom: 1px; border: 2px solid #949494; background: #fff; padding-top: 2px; }
    .row { height: 36px; display: flex; align-items: center; }
    .row .fit { margin-top: -2px; }
    .exp { width: 18px; height: 18px; border: 2px solid #b5b5b5; background: #ececec; flex: none; position: relative; top: 1px; }
    .exp::before { content: ""; position: absolute; left: 2px; right: 2px; top: 6px; height: 2px; background: #333; }
    .exp.plus::after { content: ""; position: absolute; top: 2px; bottom: 2px; left: 6px; width: 2px; background: #333; }
    .chk { width: 22px; height: 22px; border: 2px solid #1d1d1d; background: #fff; margin: 0 16px 0 16px; }
    .sw { width: 28px; height: 20px; margin: 2px 9px 0 118px; }
    .view { width: 2424px; height: 1366px; margin-left: 9px; padding-top: 1px; }
    .frame {
      height: 1364px; border-left: 4px solid #8d8c8f; border-top: 3px solid #7e7d80; border-right: 3px solid #b7b6b9;
      display: grid; grid-template-columns: 38px 2347px 32px; grid-template-rows: 39px 1287px 35px; background: #f0eef0;
    }
    .top { grid-column: 1 / 3; padding: 5px 0 0 735px; }
    .side { padding: 3px 0 0 3px; }
    .hr, .vr { overflow: hidden; }
    .rt { font: 24px "Liberation Sans", Arial, sans-serif; fill: #262626; }
    .canvas { border-left: 3px solid #828184; border-top: 3px solid #7a797c; background: #fefefe; position: relative; overflow: hidden; }
    .paper { position: absolute; left: 692px; top: -10px; width: 962px; height: 1234px; border: 2px solid #303030; background: #fff; }
    .ptitle { position: absolute; left: 256px; top: 28px; line-height: 1; }
    .map { position: absolute; left: 46px; top: 93px; }
    .attr { position: absolute; left: 685px; top: 677px; color: #f2f2f2; text-shadow: 1px 1px 1px #1b1b1b, 0 0 1px #333; display: flex; flex-direction: column; }
    .chartbox { position: absolute; left: 273px; top: 493px; width: 412px; height: 234px; outline: 2px dashed #16c3c6; outline-offset: 0; background: #fff; }
    .ct { fill: #6a6a6c; font-family: "Liberation Serif", serif; }
    .h { position: absolute; width: 14px; height: 14px; background: #1fc9c9; border: 2px solid #111; }
    .h1 { left: -7px; top: -7px; } .h2 { right: -7px; top: -7px; } .h3 { left: -7px; bottom: -7px; } .h4 { right: -7px; bottom: -7px; }
    .dash { position: absolute; left: 0; right: 0; bottom: -2px; height: 3px; background: repeating-linear-gradient(90deg, #16c3c6 0 4px, #222 4px 10px); }
    .vs { grid-column: 3; grid-row: 1 / 3; display: flex; flex-direction: column; background: #fff; border-left: 2px solid #dddcde; }
    .vs .a { height: 34px; border-bottom: 2px solid #cfcfd1; display: flex; align-items: center; justify-content: center; }
    .vs .gap { height: 309px; }
    .vs .thumb { margin-left: 2px; height: 683px; background: #dcdcdc; border: 1px solid #a9a9a9; border-width: 2px 0; display: flex; align-items: center; justify-content: center; }
    .vs .rest { flex: 1; }
    .vs .a.dn { border-top: 1px solid #cfcfd1; border-bottom: 2px solid #b5b5b7; height: 34px; }
    .bot { grid-column: 1 / 4; display: flex; align-items: center; border-top: 2px solid #e6e5e7; border-bottom: 1px solid #e0dfe1; }
    .bot > .ico { margin: -8px 0 0 5px; }
    .lv { width: 31px; height: 29px; margin: -8px 15px 0 8px; border: 2px solid #4ba6c6; background: #dcebfa; padding: 4px 0 0 8px; position: relative; }
    .hs { display: flex; margin-left: 25px; height: 31px; border-left: 2px solid #b9b8ba; border-bottom: 2px solid #a9a8aa; }
    .hs .a { width: 30px; background: #fff; display: flex; align-items: center; justify-content: center; }
    .hs .thumb { width: 2166px; margin-right: 3px; background: #dcdcdc; border-left: 2px solid #a9a9a9; border-right: 2px solid #a9a9a9; display: flex; align-items: center; padding-left: 1071px; }
    .g3 { width: 16px; height: 14px; background: repeating-linear-gradient(90deg, #6a6a6a 0 4px, transparent 4px 6px); }
    .g3.v { background: repeating-linear-gradient(#6a6a6a 0 3px, transparent 3px 5px); width: 16px; height: 13px; }
    .tabs { margin: 5px 0 0 8px; width: 39px; display: flex; flex-direction: column; }
    .tab { border: 2px solid #aaa9ac; border-right: 0; border-radius: 7px 0 0 7px; background: #f0eef0; padding: 7px 0 0 2px; }
    .vt { font-size: 24px; writing-mode: vertical-rl; color: #62626a; margin: 7px 0 0 3px; line-height: 26px; display: block; }
    .t1 { height: 142px; } .t2 { height: 136px; margin-top: -1px; }
    .status { background: linear-gradient(90deg, #efedf0, #f1eff2); display: flex; align-items: center; padding: 1px 0 0 1858px; }
    .status .fit + .fit { margin-left: 202px; }
    .float { position: absolute; left: 460px; top: 253px; width: 740px; height: 98px; border: 3px solid #868687; background: #f8f7f9; padding: 3px; }
    .float .fh { height: 40px; background: #9f9fa0; display: flex; align-items: center; padding: 1px 13px 0 4px; color: #fff; margin-bottom: 1px; }
    .float .fh .sp { flex: 1; }
    .float .fh svg { margin-bottom: 4px; }
    .float .fh .tri { border-top-color: #fff; border-width: 7px 7px 0; margin: 0 20px 2px 0; }
    .float .fb { display: flex; height: 45px; align-items: center; background: linear-gradient(#fcfcfe, #efedf0); }
    .cast { position: absolute; left: 2746px; top: 577px; width: 128px; height: 112px; background: rgba(96, 96, 96, .8); border: 2px solid #a3a3a3; display: flex; align-items: center; padding-left: 8px; }
    .cast svg + svg { margin-left: 11px; }
  `;

  render() {
    const check = html`<i class="chk"><svg width="18" height="18" viewBox="0 0 18 18"><path d="M3 8l4 5.500 8-11" fill="none" stroke="#111" stroke-width="3.400"/></svg></i>`;
    let mx = 0;
    return html`
      <div class="app">
        <header class="title">
          <svg class="logo" width="34" height="34" viewBox="0 0 28 34" preserveAspectRatio="none">
            <ellipse cx="13" cy="16" rx="12.500" ry="15.500" fill="#0f4f86" stroke="#173a4d" />
            <path d="M19 5q6 6 5 14l-5 4-2-9z" fill="#5cb84e" /><path d="M3 20q6 2 8 9l-5-2z" fill="#27a5c4" />
            <path d="M17 22L26 32" stroke="#a2592c" stroke-width="4" stroke-linecap="round" />
            <ellipse cx="11.500" cy="14" rx="6.200" ry="8" fill="#a8d6ee" stroke="#e1e5e8" stroke-width="2" />
            <path d="M9 9q4-2 6 2" stroke="#fff" stroke-width="2" fill="none" />
          </svg>
          <div class="name">${fit("ex19d.mxd - ArcMap", 27, 276)}</div>
          <div class="btns">
            <div class="b1"><svg width="22" height="10"><rect x="1" y="4" width="20" height="5" fill="#000" /></svg></div>
            <div class="b2"><svg width="22" height="20" viewBox="0 0 22 20"><path d="M5 1.500h15v13" fill="none" stroke="#222" stroke-width="2" /><rect x="3" y="6" width="12" height="11" fill="none" stroke="#000" stroke-width="4" /></svg></div>
            <div class="b3"><svg width="20" height="17" viewBox="0 0 20 17"><path d="M2 1l16 15M18 1L2 16" stroke="#000" stroke-width="4.500" /></svg></div>
          </div>
        </header>
        <nav class="menu">
          ${MENU.map(([t, x, w]) => {
            const gap = x - mx;
            mx = x + w;
            return html`<span style="margin-left:${gap}px">${fit(t, 24, w)}</span>`;
          })}
        </nav>
        <div class="tb"><div class="strip">${bar(BAR1, 4)}</div></div>
        <div class="tb"><div class="strip">${bar(BAR2, 4)}</div></div>
        <div class="main">
          <section class="toc">
            <div class="toc-h">
              ${fit("Table Of Contents", 28, 238)}<span class="sp"></span>
              <svg width="16" height="20" viewBox="0 0 16 20"><path d="M4 1.500h8v9H4zM1 11.500h14M8 12v7M10.500 1v10" fill="none" stroke="#111" stroke-width="2.200" /></svg>
              <svg width="18" height="18" viewBox="0 0 18 18"><path d="M2 2l14 14M16 2L2 16" stroke="#111" stroke-width="3.400" /></svg>
            </div>
            <div class="toc-b">
              <div class="on">${ico("tlist")}</div>${ico("tsource")}${ico("tvis")}${ico("tsel")}<i class="sep"></i>${ico("topt")}
            </div>
            <div class="tree">
              <div class="row"><i class="exp" style="margin-left:16px"></i><span style="margin:0 10px 0 13px">${ico("layers", 31, 25)}</span>${fit("Layers", 23, 70, UI, 700)}</div>
              <div class="row"><i class="exp" style="margin-left:54px"></i>${check}${fit("FinalDissolve", 23, 136)}</div>
              <div class="row"><span style="margin-left:165px">${fit("OVERALL", 23, 97)}</span></div>
              ${[["H", "#ff0000", 17], ["L", "#ffff00", 11], ["M", "#38a800", 22]].map(
                ([t, c, w]) => html`<div class="row"><i class="sw" style="background:${c}"></i>${fit(t as string, 23, w as number)}</div>`
              )}
              <div class="row"><i class="exp plus" style="margin-left:54px"></i>${check}${fit("World Imagery", 23, 156)}</div>
            </div>
          </section>
          <section class="view">
            <div class="frame">
              <div class="top">${hRuler()}</div>
              <div class="side">${vRuler()}</div>
              <div class="canvas">
                <div class="paper">
                  <div class="ptitle">${fit("Portland County Warning Area", 32, 441, ARIAL)}</div>
                  ${map()}
                  <div class="attr">
                    ${fit("Earthstar Geographics, CNES/Airbus DS,", 13, 202, ARIAL, 700)}
                    ${fit(", Aerogrid, IGN, IGP, swisstopo, and", 13, 201, ARIAL, 700)}
                  </div>
                  <div class="chartbox">
                    ${chart()}<i class="dash"></i><i class="h h1"></i><i class="h h2"></i><i class="h h3"></i><i class="h h4"></i>
                  </div>
                </div>
              </div>
              <div class="vs">
                <div class="a">${arrowGlyph(0)}</div><div class="gap"></div>
                <div class="thumb"><i class="g3 v"></i></div><div class="rest"></div>
                <div class="a dn">${arrowGlyph(180)}</div>
              </div>
              <div class="bot">
                ${ico("dview", 16, 16)}
                <div class="lv">${ico("lview", 15, 16)}</div>
                <span style="margin:-8px 13px 0 5px">${ico("refresh", 18, 18)}</span>
                <span style="margin-top:-8px">${ico("pause", 16, 16)}</span>
                <div class="hs">
                  <div class="a">${arrowGlyph(-90)}</div>
                  <div class="thumb"><i class="g3"></i></div>
                  <div class="a">${arrowGlyph(90)}</div>
                </div>
              </div>
            </div>
          </section>
          <aside class="tabs">
            <div class="tab t1">${ico("catalog", 32, 32)}<span class="vt">Catalog</span></div>
            <div class="tab t2">${ico("search", 32, 32)}<span class="vt">Search</span></div>
          </aside>
        </div>
        <footer class="status">
          ${fit("2339209.625  1136661.958 Feet", 24, 314)}${fit("20.02  19.44 Centimeters", 24, 254)}
        </footer>

        <div class="float">
          <div class="fh">${fit("Layout", 28, 88)}<span class="sp"></span><i class="tri"></i>
            <svg width="18" height="18" viewBox="0 0 18 18"><path d="M2 1l14 16M16 1L2 17" stroke="#fff" stroke-width="4" /></svg></div>
          <div class="fb">${bar(LAYOUT_BAR, 466)}</div>
        </div>
        <div class="cast">
          <svg width="16" height="30" viewBox="0 0 16 30"><path d="M13 2L3 15l10 13" fill="none" stroke="#a2a2a2" stroke-width="3.400" /></svg>
          <svg width="56" height="56" viewBox="0 0 56 56"><g fill="none" stroke="#cdcdcd"><circle cx="28" cy="28" r="26" stroke-width="2.400" />
            <path d="M17 22.500a7 7 0 0 1 0 11M23 17a14 14 0 0 1 0 22M29 12a21 21 0 0 1 0 32" stroke-width="3.600" /></g><path d="M11 23q4 5 0 10 5-1 5-5t-5-5z" fill="#cdcdcd" /></svg>
        </div>
      </div>
    `;
  }
}
